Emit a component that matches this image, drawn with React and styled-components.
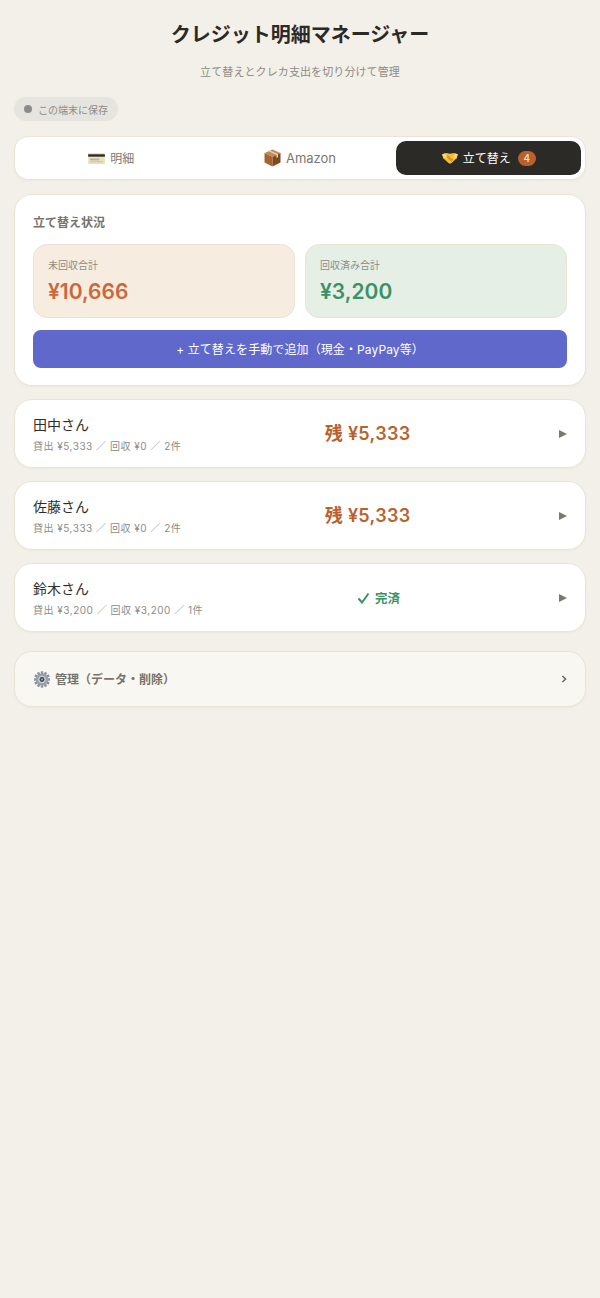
import React from "react";
import styled, { createGlobalStyle } from "styled-components";

const Global = createGlobalStyle`
  html, body { margin: 0; padding: 0; background: #f3f0e9; }
  body { font-family: Inter, "Noto Sans CJK JP", sans-serif; }
  * { box-sizing: border-box; }
`;
const Page = styled.div`
  min-height: 1298px;
  padding: 21px 14px;
  display: flex;
  flex-direction: column;
`;
const Title = styled.h1`
  margin: 0;
  text-align: center;
  font-size: 20px;
  line-height: 28px;
  font-weight: 700;
  color: #2b2a27;
`;
const Subtitle = styled.p`
  margin: 15px 0 0;
  text-align: center;
  font-size: 11px;
  letter-spacing: 0.1px;
  line-height: 16px;
  color: #8e8c86;
`;
const Pill = styled.div`
  align-self: flex-start;
  margin: 17px 0 0;
  height: 24px;
  padding: 0 10px;
  border-radius: 12px;
  background: #e6e4df;
  display: flex;
  align-items: center;
  gap: 6px;
  font-size: 10px;
  color: #8e8c86;
`;
const Dot = styled.span`
  width: 8px;
  height: 8px;
  border-radius: 50%;
  background: #8c8b8b;
`;
const Tabs = styled.nav`
  margin-top: 15px;
  height: 44px;
  padding: 4px;
  background: #fff;
  border: 1px solid #ebe4d4;
  box-shadow: 0 1px 2px rgba(120, 105, 70, 0.05);
  border-radius: 14px;
  display: grid;
  grid-template-columns: repeat(3, 1fr);
  gap: 4px;
`;
const Tab = styled.div`
  display: flex;
  align-items: center;
  justify-content: center;
  gap: 5px;
  border-radius: 10px;
  font-size: 12px;
  background: ${(p) => (p.$active ? "#2b2a27" : "transparent")};
  color: ${(p) => (p.$active ? "#fff" : "#7b776e")};
`;
const TabText = styled.span`
  margin-bottom: 2px;
`;
const TabLatin = styled.span`
  font-size: 13px;
`;
const Count = styled.span`
  margin-left: 2px;
  width: 18px;
  height: 15px;
  border-radius: 8px;
  background: #b9602d;
  color: #f6e6da;
  font-size: 10px;
  font-weight: 500;
  display: flex;
  align-items: center;
  justify-content: center;
`;
const Card = styled.section`
  margin-top: 14px;
  padding: 18px 18px 17px;
  background: #fff;
  border: 1px solid #ebe4d4;
  box-shadow: 0 1px 2px rgba(120, 105, 70, 0.05);
  border-radius: 18px;
`;
const CardTitle = styled.h2`
  margin: 0;
  font-size: 12px;
  line-height: 20px;
  font-weight: 700;
  color: #77736a;
`;
const Stats = styled.div`
  margin-top: 11px;
  display: grid;
  grid-template-columns: 1fr 1fr;
  gap: 10px;
`;
const Stat = styled.div`
  height: 74px;
  padding: 13px 14px;
  border-radius: 14px;
  border: 1px solid #e9e3d5;
  background: ${(p) => p.$bg};
`;
const StatLabel = styled.div`
  font-size: 10px;
  line-height: 14px;
  color: #8e8c86;
`;
const StatValue = styled.div`
  margin-top: 6px;
  font-size: 21px;
  line-height: 28px;
  font-weight: 600;
  color: ${(p) => p.$color};
`;
const AddButton = styled.button`
  display: block;
  width: 100%;
  height: 38px;
  margin-top: 12px;
  padding: 0 0 2px;
  border: 0;
  border-radius: 8px;
  background: #6068cc;
  color: #fff;
  font: 400 12px Inter, "Noto Sans CJK JP", sans-serif;
  letter-spacing: 0.1px;
`;
const Row = styled.div`
  margin-top: 13px;
  height: 69px;
  padding: 0 18px;
  background: #fff;
  border: 1px solid #ebe4d4;
  box-shadow: 0 1px 2px rgba(120, 105, 70, 0.05);
  border-radius: 18px;
  display: flex;
  align-items: center;
  justify-content: space-between;
`;
const Info = styled.div`
  padding-top: 2px;
`;
const Name = styled.div`
  font-size: 14px;
  line-height: 20px;
  font-weight: 400;
  color: #2f2e2b;
`;
const Sub = styled.div`
  margin-top: 4px;
  font-size: 10px;
  letter-spacing: 0.5px;
  line-height: 15px;
  color: #8e8c86;
`;
const Remain = styled.div`
  margin-bottom: 3px;
  font-size: 18px;
  letter-spacing: 0.3px;
  font-weight: 600;
  color: #b9622d;
`;
const Done = styled.div`
  display: flex;
  align-items: center;
  gap: 5px;
  font-size: 12.5px;
  font-weight: 600;
  color: #3c9267;
`;
const Arrow = styled.svg`
  width: 13px;
  height: 8px;
  fill: #7b786e;
`;
const Manage = styled.div`
  margin-top: 19px;
  height: 56px;
  padding: 0 18px;
  background: #f9f7f2;
  border: 1px solid #ebe4d4;
  box-shadow: 0 1px 2px rgba(120, 105, 70, 0.05);
  border-radius: 18px;
  display: flex;
  align-items: center;
  justify-content: space-between;
`;
const ManageLabel = styled.div`
  display: flex;
  align-items: center;
  gap: 5px;
  padding-bottom: 2px;
  font-size: 12px;
  font-weight: 700;
  color: #77736a;
`;
const Chevron = styled.svg`
  width: 8px;
  height: 10px;
  fill: none;
  stroke: #6f6c63;
  stroke-width: 1.6;
`;
const Emoji = styled.svg`
  width: ${(p) => p.$w}px;
  height: ${(p) => p.$h}px;
  flex: none;
`;
const GearEmoji = styled(Emoji)`
  margin: 2px 0 0 1px;
`;

const CardIcon = () => (
  <Emoji $w={17} $h={13} viewBox="0 0 18 14">
    <rect y="1" width="18" height="12" rx="1" fill="#ece2b8" />
    <rect y="2.5" width="18" height="2.5" fill="#2a271f" />
    <rect x="2" y="7" width="10" height="2" fill="#a9b6bd" />
    <rect x="2" y="10" width="14" height="1" fill="#cfc493" />
  </Emoji>
);
const BoxIcon = () => (
  <Emoji $w={17} $h={18} viewBox="0 0 17 18">
    <path d="M8.5 0.5 16.5 4 8.5 8 0.5 4Z" fill="#c08a5a" />
    <path d="M0.5 4 8.5 8V17.5L0.5 13.5Z" fill="#a5642f" />
    <path d="M16.5 4 8.5 8V17.5L16.5 13.5Z" fill="#7f4a22" />
    <path d="M4.5 2.3 12.5 6V9L14 8.2V5.3L6.2 1.6Z" fill="#e9d3b0" />
  </Emoji>
);
const HandshakeIcon = () => (
  <Emoji $w={16} $h={12} viewBox="0 0 17 13">
    <path d="M0 2.5 4.5 1 8.5 2 12.5 1 17 2.5 15.5 7 9.5 12.5H7.5L1.5 7Z" fill="#f4bd3e" />
    <path d="M6 3.5 9 6 12 8.5 10 10.5 5 6Z" fill="#d8981f" />
    <path d="M0 2.5 3 1.6 5 6 1.5 7Z M17 2.5 14 1.6 12 6 15.5 7Z" fill="#fbd86a" />
  </Emoji>
);
const GearIcon = () => (
  <GearEmoji $w={16} $h={17} viewBox="0 0 17 18">
    <g fill="#8a94a0">
      {[0, 30, 60, 90, 120, 150].map((a) => (
        <rect key={a} x="7.2" y="0.3" width="2.6" height="17.4" transform={`rotate(${a} 8.5 9)`} />
      ))}
    </g>
    <circle cx="8.5" cy="9" r="6.3" fill="#98a1ac" />
    <circle cx="8.5" cy="9" r="4" fill="#c8ccd1" />
    <circle cx="8.5" cy="9" r="2.6" fill="#454952" />
    <circle cx="8.5" cy="9" r="1" fill="#a7adb4" />
  </GearEmoji>
);
const Check = () => (
  <svg width="13" height="12" viewBox="0 0 13 12" fill="none" stroke="#3c9267" strokeWidth="2">
    <path d="M1.5 6.5 5 10.5 11.5 1.5" />
  </svg>
);

const people = [
  { name: "田中さん", sub: "貸出 ¥5,333 ／ 回収 ¥0 ／ 2件", remain: "残 ¥5,333" },
  { name: "佐藤さん", sub: "貸出 ¥5,333 ／ 回収 ¥0 ／ 2件", remain: "残 ¥5,333" },
  { name: "鈴木さん", sub: "貸出 ¥3,200 ／ 回収 ¥3,200 ／ 1件" },
];

export default function App() {
  return (
    <Page>
      <Global />
      <Title>クレジット明細マネージャー</Title>
      <Subtitle>立て替えとクレカ支出を切り分けて管理</Subtitle>
      <Pill>
        <Dot />
        この端末に保存
      </Pill>
      <Tabs>
        <Tab><CardIcon /><TabText>明細</TabText></Tab>
        <Tab><BoxIcon /><TabLatin>Amazon</TabLatin></Tab>
        <Tab $active><HandshakeIcon /><TabText>立て替え</TabText><Count>4</Count></Tab>
      </Tabs>
      <Card>
        <CardTitle>立て替え状況</CardTitle>
        <Stats>
          <Stat $bg="#f6ecdf">
            <StatLabel>未回収合計</StatLabel>
            <StatValue $color="#cc673a">¥10,666</StatValue>
          </Stat>
          <Stat $bg="#e6efe6">
            <StatLabel>回収済み合計</StatLabel>
            <StatValue $color="#3c9267">¥3,200</StatValue>
          </Stat>
        </Stats>
        <AddButton>+ 立て替えを手動で追加（現金・PayPay等）</AddButton>
      </Card>
      {people.map((p) => (
        <Row key={p.name}>
          <Info>
            <Name>{p.name}</Name>
            <Sub>{p.sub}</Sub>
          </Info>
          {p.remain ? <Remain>{p.remain}</Remain> : <Done><Check />完済</Done>}
          <Arrow viewBox="0 0 13 8"><path d="M5 0 13 4 5 8Z" /></Arrow>
        </Row>
      ))}
      <Manage>
        <ManageLabel><GearIcon />管理（データ・削除）</ManageLabel>
        <Chevron viewBox="0 0 8 10"><path d="M3.5 2 6.5 5 3.5 8" /></Chevron>
      </Manage>
    </Page>
  );
}
